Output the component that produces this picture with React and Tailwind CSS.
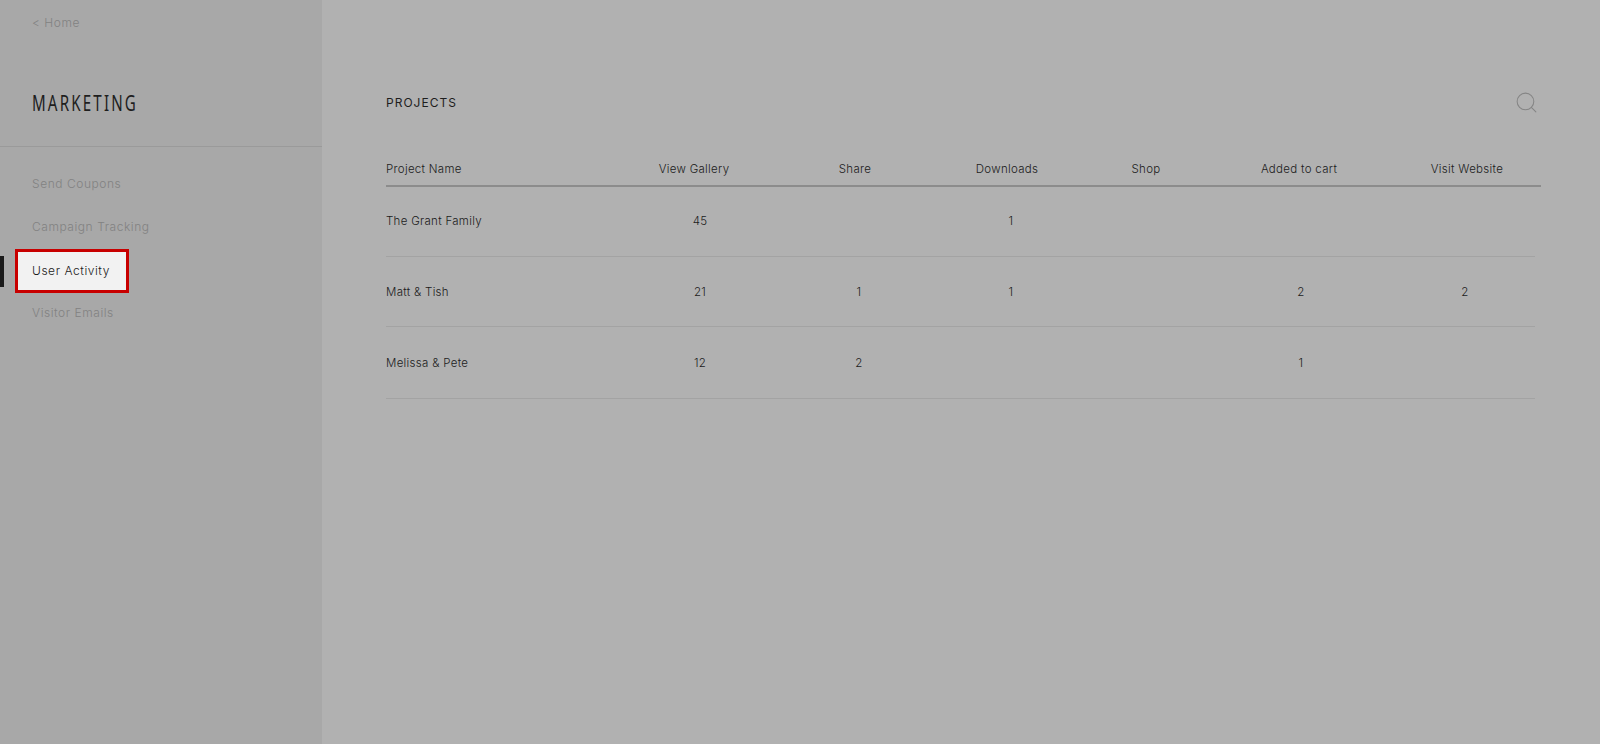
import { Search } from 'lucide-react';

const headers = ['View Gallery', 'Share', 'Downloads', 'Shop', 'Added to cart', 'Visit Website'];

const rows = [
    { size: 'h-[70px]', cells: ['The Grant Family', '45', '', '1', '', '', ''] },
    { size: 'h-[70px] pt-[2px]', cells: ['Matt & Tish', '21', '1', '1', '', '2', '2'] },
    { size: 'h-[72px] pt-[2px]', cells: ['Melissa & Pete', '12', '2', '', '', '1', ''] },
];

const App = () => {
    return (
        <div className="flex h-[744px] w-[1600px] overflow-hidden bg-[#b1b1b1] font-['Inter',sans-serif] text-[11.5px] font-light tracking-[0.3px] text-[#1c1c1c]">
            {/* Sidebar */}
            <aside className="w-[322px] shrink-0 bg-[#a8a8a8] text-[12px] tracking-[0.55px]">
                <div className="h-[147px] border-b border-[#9a9a9a] pl-8 pt-[14px]">
                    <div className="h-[18px] leading-[18px] text-[#828282]">&lt; Home</div>
                    <h1 className="mt-[59px] origin-left scale-x-[0.72] font-['Noto_Sans',sans-serif] text-[21px] leading-6 font-normal tracking-[3px] text-[#1e1e1e]">MARKETING</h1>
                </div>
                <nav className="pt-[27px]">
                    <div className="h-5 pl-8 leading-5 text-[#828282]">Send Coupons</div>
                    <div className="mt-[23px] h-5 pl-8 leading-5 text-[#828282]">Campaign Tracking</div>
                    <div className="mt-[12px] flex items-center">
                        <div className="h-[31px] w-1 bg-[#1a1a1a]"></div>
                        <div className="ml-[11px] flex h-[44px] w-[114px] items-center border-[3px] border-[#c80000] bg-[#f2f2f2] pl-[14px] text-[#1a1a1a]">User Activity</div>
                    </div>
                    <div className="mt-[10px] h-5 pl-8 leading-5 text-[#828282]">Visitor Emails</div>
                </nav>
            </aside>

            {/* Main */}
            <main className="pl-16 pt-[92px]">
                <div className="flex h-[22px] w-[1149px] items-center justify-between">
                    <h2 className="text-[12px] font-normal tracking-[1px] text-[#1e1e1e]">PROJECTS</h2>
                    <Search className="mr-[-4px] h-[25px] w-[25px] -translate-y-px text-[#858585]" strokeWidth={1} />
                </div>

                <div className="mt-[44px] grid h-[29px] w-[1155px] grid-cols-[219px_178px_144px_160px_118px_188px_148px] items-start border-b-2 border-[#8c8c8c] pt-px leading-5">
                    <div>Project Name</div>
                    {headers.map(h => (
                        <div key={h} className="text-center">{h}</div>
                    ))}
                </div>

                {rows.map(row => (
                    <div key={row.cells[0]} className={`grid ${row.size} w-[1149px] grid-cols-[227px_174px_144px_160px_116px_188px_140px] items-center border-b border-[#a3a3a3]`}>
                        {row.cells.map((cell, i) => (
                            <div key={i} className={i === 0 ? '' : 'text-center'}>{cell}</div>
                        ))}
                    </div>
                ))}
            </main>
        </div>
    );
};

export default App;
